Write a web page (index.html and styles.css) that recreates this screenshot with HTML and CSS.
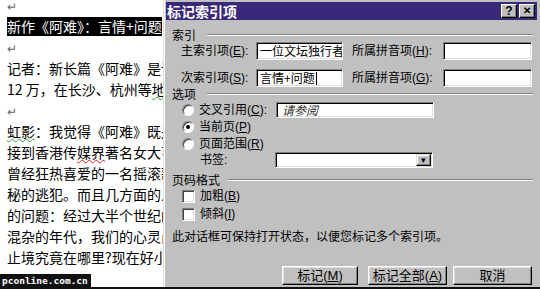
FILE: index.html
```html
<!DOCTYPE html>
<html lang="zh-CN">
<head>
    <meta charset="UTF-8">
    <title>标记索引项</title>
    <link rel="stylesheet" href="styles.css">
</head>
<body>
<div id="screen">
    <div id="doc">
        <p class="mark">↵</p>
        <p><span class="sel">新作《阿难》：言情+问题</span><span class="mark">·</span></p>
        <p class="mark">↵</p>
        <p>记者：新长篇《阿难》是讲述一个</p>
        <p>12 万，在长沙、杭州等<span class="wavy-g">地</span>签售</p>
        <p class="mark">↵</p>
        <p><span class="wavy-g">虹影</span>：我觉得《阿难》既是一</p>
        <p>接到香港传<span class="wavy-r">媒界</span>著名女大亨</p>
        <p>曾经狂热喜爱的一名摇滚歌手</p>
        <p>秘的逃犯。而且几方面的人都</p>
        <p>的问题：经过大半个世纪的动</p>
        <p>混杂的年代，我们的心灵尚未</p>
        <p>止境究竟在哪里?现在好小说</p>
        <div id="watermark">pconline.com.cn</div>
    </div>

    <div id="dialog">
        <div class="titlebar">
            <span class="title">标记索引项</span>
            <span class="tbtn">?</span>
            <span class="tbtn close">✕</span>
        </div>

        <div class="content">
            <div class="legend legend-index"><span class="legend-text">索引</span><span class="etch"></span></div>

            <div class="row row-main">
                <span class="lbl">主索引项(<u>E</u>):</span>
                <span class="field f-short">一位文坛独行者</span>
                <span class="lbl2">所属拼音项(<u>H</u>):</span>
                <span class="field f-pinyin"></span>
            </div>
            <div class="row row-sub">
                <span class="lbl">次索引项(<u>S</u>):</span>
                <span class="field f-short">言情+问题<i class="caret"></i></span>
                <span class="lbl2">所属拼音项(<u>G</u>):</span>
                <span class="field f-pinyin"></span>
            </div>

            <div class="legend legend-opt"><span class="legend-text">选项</span><span class="etch"></span></div>

            <div class="row opt opt-1">
                <span class="radio"></span>
                <span class="opt-lbl">交叉引用(<u>C</u>):</span>
                <span class="field f-long"><em class="hint">请参阅</em></span>
            </div>
            <div class="row opt opt-2">
                <span class="radio on"></span>
                <span class="opt-lbl">当前页(<u>P</u>)</span>
            </div>
            <div class="row opt opt-3">
                <span class="radio"></span>
                <span class="opt-lbl">页面范围(<u>R</u>)</span>
            </div>
            <div class="row bookmark">
                <span class="bm-lbl">书签:</span>
                <span class="field f-long select"><span class="drop">▾</span></span>
            </div>

            <div class="legend legend-fmt"><span class="legend-text">页码格式</span><span class="etch"></span></div>

            <div class="row chk chk-1">
                <span class="box"></span>
                <span class="opt-lbl">加粗(<u>B</u>)</span>
            </div>
            <div class="row chk chk-2">
                <span class="box"></span>
                <span class="opt-lbl">倾斜(<u>I</u>)</span>
            </div>

            <div class="msg">此对话框可保持打开状态，以便您标记多个索引项。</div>

            <div class="buttons">
                <span class="btn btn-mark">标记(<u>M</u>)</span>
                <span class="btn btn-all">标记全部(<u>A</u>)</span>
                <span class="btn btn-cancel">取消</span>
            </div>
        </div>
    </div>
</div>
</body>
</html>
```

FILE: styles.css
```css
*{
    box-sizing: border-box;
}
html,body{
    margin: 0;
    padding: 0;
    background: #fff;
}
#screen{
    width: 540px;
    height: 289px;
    display: flex;
    border-bottom: 2px solid #111;
    overflow: hidden;
}

/* 左边的文档 */
#doc{
    position: relative;
    width: 163px;
    flex: none;
    background: #fff;
    padding-left: 7px;
    overflow: hidden;
    font-family: "Noto Sans CJK SC", sans-serif;
    font-size: 14px;
    color: #000;
}
#doc p{
    margin: 0;
    height: 21px;
    line-height: 21px;
    white-space: nowrap;
}
#doc p:first-child{
    margin-top: -5px;
}
#doc .mark{
    color: #666;
    font-size: 12px;
}
#doc .sel{
    background: #000;
    color: #fff;
    display: inline-block;
    line-height: 19px;
}
.wavy-g{
    text-decoration: underline wavy #3a9a3a;
    text-decoration-thickness: 1px;
}
.wavy-r{
    text-decoration: underline wavy #d02020;
    text-decoration-thickness: 1px;
}
#watermark{
    position: absolute;
    left: 0;
    bottom: 0;
    background: #111;
    color: #fff;
    font-family: "DejaVu Sans Mono", monospace;
    font-weight: bold;
    font-size: 9.5px;
    line-height: 13px;
    padding: 0 3px 0 2px;
}

/* 对话框 */
#dialog{
    flex: 1;
    background: #c0c0c0;
    border-left: 1px solid #dfdfdf;
    box-shadow: inset 1px 0 #fff;
    padding: 2px 3px 0 2px;
    display: flex;
    flex-direction: column;
    font-family: "Liberation Sans", "Noto Sans CJK SC", sans-serif;
    font-size: 12px;
    line-height: 14px;
    color: #000;
}
.titlebar{
    height: 18px;
    background: #3a2878;
    display: flex;
    align-items: center;
    padding: 0 2px 0 1px;
    gap: 2px;
}
.title{
    flex: 1;
    color: #fff;
    font-family: "Noto Sans CJK SC", sans-serif;
    font-weight: bold;
    font-size: 14px;
    line-height: 16px;
}
.tbtn{
    width: 16px;
    height: 14px;
    background: #c0c0c0;
    border: 1px solid;
    border-color: #fff #000 #000 #fff;
    box-shadow: inset -1px -1px #808080;
    font-family: "Liberation Sans", sans-serif;
    font-weight: bold;
    font-size: 12px;
    line-height: 12px;
    text-align: center;
}
.tbtn.close{
    font-size: 10px;
}

.content{
    padding: 0 4px 0 6px;
    display: flex;
    flex-direction: column;
    flex: 1;
}
.legend{
    display: flex;
    align-items: center;
    height: 14px;
    font-family: "Noto Sans CJK SC", sans-serif;
}
.legend-text{
    min-width: 27px;
    margin-right: 8px;
    font-size: 12px;
    line-height: 14px;
}
.etch{
    flex: 1;
    border-top: 1px solid #808080;
    border-bottom: 1px solid #fff;
}
.legend-index{ margin-top: 8px; }
.legend-opt{ margin-top: 0; }
.legend-fmt{ margin-top: 5px; }

.row{
    display: flex;
    align-items: center;
}
.row-main,.row-sub{
    height: 18px;
    padding-left: 9px;
}
.row-sub{ margin-top: 9px; }
.lbl{
    width: 75px;
}
.lbl2{
    width: 91px;
    margin-left: 9px;
}
.field{
    height: 18px;
    background: #fff;
    border: 1px solid;
    border-color: #808080 #fff #fff #808080;
    box-shadow: inset 1px 1px #000, inset -1px -1px #dfdfdf;
    padding: 0 3px;
    font-family: "Noto Sans CJK SC", sans-serif;
    font-size: 12px;
    line-height: 14px;
    white-space: nowrap;
    overflow: hidden;
    display: flex;
    align-items: center;
}
.f-short{ width: 87px; }
.f-pinyin{ width: 89px; }
.f-long{ width: 158px; height: 16px; }
.caret{
    display: inline-block;
    width: 1px;
    height: 13px;
    background: #000;
    margin-left: 1px;
}
.hint{
    font-style: italic;
    color: #333;
    margin-left: 2px;
}

.opt,.chk{
    padding-left: 10px;
    height: 16px;
}
.opt-1{ margin-top: 1px; }
.opt-2{ height: 18px; }
.opt-3{ margin-top: 0; }
.opt-lbl{
    margin-left: 5px;
    width: 77px;
}
.radio{
    width: 12px;
    height: 12px;
    border-radius: 50%;
    background: #fff;
    border: 1px solid;
    border-color: #808080 #fff #fff #808080;
    box-shadow: inset 1px 1px #404040;
    display: flex;
    align-items: center;
    justify-content: center;
}
.radio.on::after{
    content: "";
    width: 4px;
    height: 4px;
    border-radius: 50%;
    background: #000;
}
.bookmark{
    height: 16px;
    padding-left: 28px;
}
.bm-lbl{
    width: 75px;
}
.select{
    justify-content: flex-end;
    padding: 0 1px;
}
.drop{
    width: 15px;
    height: 12px;
    background: #c0c0c0;
    border: 1px solid;
    border-color: #dfdfdf #000 #000 #dfdfdf;
    box-shadow: inset -1px -1px #808080, inset 1px 1px #fff;
    font-size: 9px;
    line-height: 10px;
    text-align: center;
}
.box{
    width: 13px;
    height: 13px;
    background: #fff;
    border: 1px solid;
    border-color: #808080 #fff #fff #808080;
    box-shadow: inset 1px 1px #404040, inset -1px -1px #dfdfdf;
}
.chk-1{ margin-top: 1px; }
.chk-2{ margin-top: 2px; }
.msg{
    margin-top: 7px;
    height: 14px;
    line-height: 14px;
    font-family: "Noto Sans CJK SC", sans-serif;
    white-space: nowrap;
}
.buttons{
    margin-top: 23px;
    display: flex;
    justify-content: flex-end;
    padding-right: 1px;
}
.btn{
    height: 19px;
    background: #c0c0c0;
    border: 1px solid;
    border-color: #fff #000 #000 #fff;
    box-shadow: inset -1px -1px #808080, inset 1px 1px #dfdfdf;
    display: flex;
    align-items: center;
    justify-content: center;
    font-size: 13px;
}
.btn-mark{ width: 76px; }
.btn-all{ width: 79px; margin-left: 10px; }
.btn-cancel{ width: 79px; margin-left: 6px; }
```
